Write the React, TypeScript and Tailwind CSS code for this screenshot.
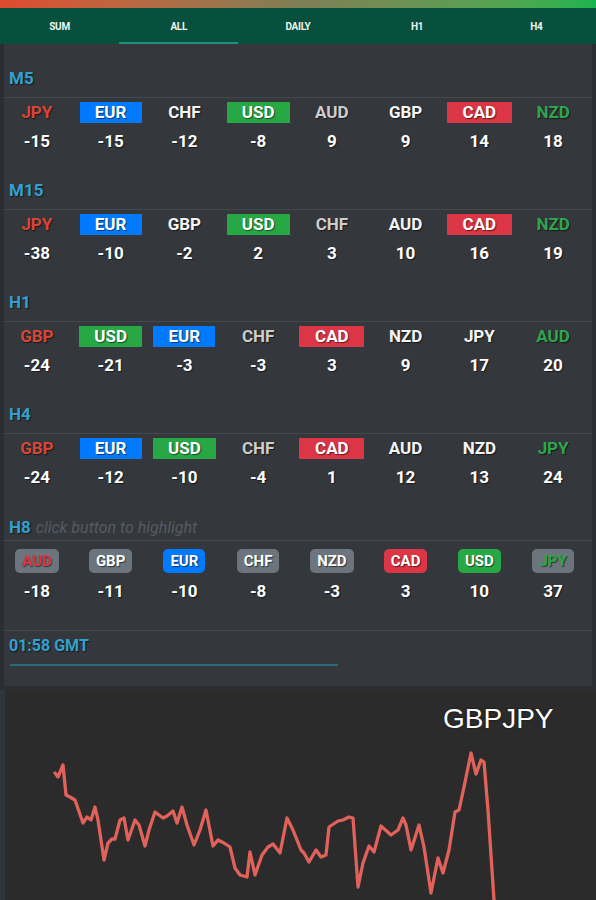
import React from "react";

type Kind = "red" | "green" | "white" | "gray" | "blue" | "bgreen" | "bred";
type Item = [string, string, Kind];

interface Section {
  name: string;
  items: Item[];
}

const SECTIONS: Section[] = [
  {
    name: "M5",
    items: [
      ["JPY", "-15", "red"],
      ["EUR", "-15", "blue"],
      ["CHF", "-12", "white"],
      ["USD", "-8", "bgreen"],
      ["AUD", "9", "gray"],
      ["GBP", "9", "white"],
      ["CAD", "14", "bred"],
      ["NZD", "18", "green"],
    ],
  },
  {
    name: "M15",
    items: [
      ["JPY", "-38", "red"],
      ["EUR", "-10", "blue"],
      ["GBP", "-2", "white"],
      ["USD", "2", "bgreen"],
      ["CHF", "3", "gray"],
      ["AUD", "10", "white"],
      ["CAD", "16", "bred"],
      ["NZD", "19", "green"],
    ],
  },
  {
    name: "H1",
    items: [
      ["GBP", "-24", "red"],
      ["USD", "-21", "bgreen"],
      ["EUR", "-3", "blue"],
      ["CHF", "-3", "gray"],
      ["CAD", "3", "bred"],
      ["NZD", "9", "white"],
      ["JPY", "17", "white"],
      ["AUD", "20", "green"],
    ],
  },
  {
    name: "H4",
    items: [
      ["GBP", "-24", "red"],
      ["EUR", "-12", "blue"],
      ["USD", "-10", "bgreen"],
      ["CHF", "-4", "gray"],
      ["CAD", "1", "bred"],
      ["AUD", "12", "white"],
      ["NZD", "13", "white"],
      ["JPY", "24", "green"],
    ],
  },
];

// H8 row uses rounded pills, grey unless highlighted
const H8: { code: string; value: string; pill: string }[] = [
  { code: "AUD", value: "-18", pill: "bg-[#6c757d] text-[#dc3545]" },
  { code: "GBP", value: "-11", pill: "bg-[#6c757d] text-white" },
  { code: "EUR", value: "-10", pill: "bg-[#007bff] text-white" },
  { code: "CHF", value: "-8", pill: "bg-[#6c757d] text-white" },
  { code: "NZD", value: "-3", pill: "bg-[#6c757d] text-white" },
  { code: "CAD", value: "3", pill: "bg-[#dc3545] text-white" },
  { code: "USD", value: "10", pill: "bg-[#28a745] text-white" },
  { code: "JPY", value: "37", pill: "bg-[#6c757d] text-[#28a745]" },
];

const KIND_CLASS: Record<Kind, string> = {
  red: "text-[#d6473a]",
  green: "text-[#2fa54f]",
  white: "text-[#f5f5f5]",
  gray: "text-[#cdcdcd]",
  blue: "bg-[#007bff] text-white w-[62px]",
  bgreen: "bg-[#28a745] text-white w-[63px]",
  bred: "bg-[#dc3545] text-white w-[65px]",
};

const TABS = ["SUM", "ALL", "DAILY", "H1", "H4"];

const CHART: [number, number][] = [
  [55, 83], [58, 87], [63, 75], [66, 105], [70, 107], [75, 110], [83, 133],
  [87, 127], [91, 130], [95, 117], [98, 130], [104, 170], [108, 153], [112, 149],
  [115, 149], [120, 130], [124, 128], [128, 150], [135, 130], [139, 135],
  [145, 156], [149, 140], [155, 122], [163, 128], [167, 126], [173, 121],
  [177, 133], [182, 117], [187, 135], [194, 155], [200, 140], [206, 120],
  [213, 156], [218, 150], [224, 153], [230, 157], [235, 178], [240, 185],
  [247, 187], [250, 162], [255, 185], [262, 165], [268, 157], [273, 154],
  [280, 163], [287, 128], [293, 140], [301, 160], [304, 163], [309, 172],
  [316, 160], [321, 167], [326, 165], [329, 137], [338, 131], [343, 130],
  [349, 127], [353, 128], [358, 197], [363, 173], [369, 156], [374, 162],
  [381, 136], [391, 145], [398, 140], [403, 128], [406, 135], [411, 160],
  [419, 135], [424, 157], [431, 203], [438, 168], [443, 183], [449, 160],
  [455, 122], [459, 120], [464, 97], [471, 63], [476, 84], [481, 70],
  [484, 72], [488, 120], [494, 210], [497, 230],
];

const shadow = "[text-shadow:1px_1px_1px_rgba(0,0,0,0.55)]";

function CurrencyRow({ items }: { items: Item[] }) {
  return (
    <div className="-ml-[4px] w-[590px]">
      <div className="mt-[4px] grid h-[21px] grid-cols-8">
        {items.map(([code, , kind], i) => (
          <div key={i} className="flex justify-center">
            <span
              className={`flex h-[21px] items-center justify-center text-[17px] font-bold leading-none ${shadow} ${KIND_CLASS[kind]}`}
            >
              {code}
            </span>
          </div>
        ))}
      </div>
      <div className="mt-[6px] grid h-[24px] grid-cols-8">
        {items.map(([, value], i) => (
          <div key={i} className={`text-center text-[17px] font-bold leading-[24px] text-white ${shadow}`}>
            {value}
          </div>
        ))}
      </div>
    </div>
  );
}

export default function App() {
  const points = CHART.map(([x, y]) => `${x},${y}`).join(" ");

  return (
    <div className="w-[596px] h-[900px] overflow-hidden bg-[#2a2d31] font-['Roboto','Liberation_Sans',sans-serif]">
      {/* top gradient strip */}
      <div className="h-[8px] bg-gradient-to-r from-[#e0492e] via-[#7e7e55] to-[#17b44f]" />

      {/* tabs */}
      <div className="grid h-[36px] grid-cols-5 bg-[#06503d]">
        {TABS.map((t) => (
          <div key={t} className="relative flex items-center justify-center">
            <span className="text-[10px] font-bold tracking-tight text-[#eef4f1]">{t}</span>
            {t === "ALL" && <div className="absolute bottom-0 left-0 right-0 h-[2px] bg-[#1f8f80]" />}
          </div>
        ))}
      </div>

      {/* main panel */}
      <div className="mx-[4px] bg-[#34373c] pt-[20px] pb-[20px]">
        {SECTIONS.map((s, idx) => (
          <div key={s.name} className={idx === SECTIONS.length - 1 ? "pb-[25px]" : "pb-[23px]"}>
            <div className={`h-[28px] pl-[5px] text-[17px] font-bold leading-[28px] text-[#33a0d2] ${shadow}`}>
              {s.name}
            </div>
            <div className="mt-[5px] h-px bg-[#45494f]" />
            <CurrencyRow items={s.items} />
          </div>
        ))}

        {/* H8 */}
        <div className="h-[26px] pl-[5px] leading-[26px]">
          <span className={`text-[17px] font-bold text-[#33a0d2] ${shadow}`}>H8</span>
          <span className="ml-[5px] text-[16px] italic text-[#565b62]">click button to highlight</span>
        </div>
        <div className="h-px bg-[#45494f]" />
        <div className="-ml-[4px] w-[590px]">
          <div className="mt-[8px] grid h-[24px] grid-cols-8">
            {H8.map((c) => (
              <div key={c.code} className="flex justify-center">
                <span
                  className={`flex h-[24px] items-center rounded-[5px] px-[7px] text-[15px] font-bold leading-none ${shadow} ${c.pill}`}
                >
                  {c.code}
                </span>
              </div>
            ))}
          </div>
          <div className="mt-[6px] grid h-[24px] grid-cols-8">
            {H8.map((c) => (
              <div key={c.code} className={`text-center text-[17px] font-bold leading-[24px] text-white ${shadow}`}>
                {c.value}
              </div>
            ))}
          </div>
        </div>
        <div className="mt-[27px] h-px bg-[#45494f]" />
        <div className={`mt-[3px] h-[24px] pl-[5px] text-[16px] font-bold leading-[24px] text-[#33a0d2] ${shadow}`}>
          01:58 GMT
        </div>
        <div className="ml-[6px] mt-[6px] h-[2px] w-[328px] bg-[#2c6b7b]" />
      </div>

      {/* chart */}
      <div className="mt-[4px] flex h-[210px] bg-[#30353c]">
        <div className="relative ml-[5px] flex-1 bg-[#2b2b2b]">
          <svg width="591" height="210" viewBox="5 0 591 210" className="block">
            <polyline
              points={points}
              fill="none"
              stroke="#e0625a"
              strokeWidth="3.3"
              strokeLinejoin="round"
              strokeLinecap="round"
            />
          </svg>
          <div className="absolute left-[438px] top-[15px] font-['Liberation_Sans',sans-serif] text-[28px] leading-none text-white [text-shadow:0_0_2px_rgba(0,0,0,0.8)]">
            GBPJPY
          </div>
        </div>
      </div>
    </div>
  );
}
